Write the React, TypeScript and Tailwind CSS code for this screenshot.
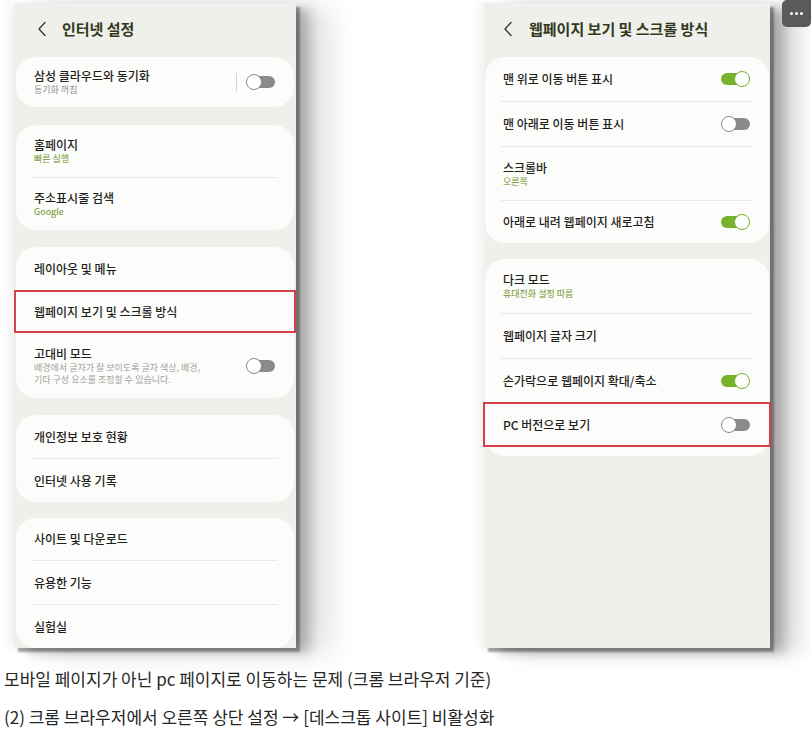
import React from 'react';

type ToggleState = 'on' | 'off';

function Toggle({ state }: { state: ToggleState }) {
  if (state === 'on') {
    return (
      <div className="relative w-[29px] h-[16px] shrink-0">
        <div className="absolute top-[2px] bottom-[2px] left-0 right-[5px] rounded-full bg-[#78b22c]" />
        <div className="absolute right-0 top-0 w-[16px] h-[16px] rounded-full bg-white border-[1.5px] border-[#78b22c]" />
      </div>
    );
  }
  return (
    <div className="relative w-[29px] h-[16px] shrink-0">
      <div className="absolute top-[2px] bottom-[2px] left-[5px] right-0 rounded-full bg-[#8a8a88]" />
      <div className="absolute left-0 top-0 w-[16px] h-[16px] rounded-full bg-white border-[1.5px] border-[#8a8a88]" />
    </div>
  );
}

function Chevron() {
  return (
    <svg width="10" height="16" viewBox="0 0 10 16" fill="none" className="shrink-0">
      <polyline points="8,1.5 2,8 8,14.5" stroke="#3a3a36" strokeWidth="1.4" strokeLinecap="round" strokeLinejoin="round" />
    </svg>
  );
}

function Divider() {
  return <div className="mx-[16px] h-px bg-[#e8e8e4]" />;
}

interface RowProps {
  title: string;
  sub?: string;
  green?: boolean;
  desc?: string[];
  toggle?: ToggleState;
  separator?: boolean;
  highlight?: boolean;
  height: string;
}

function Row({ title, sub, green, desc, toggle, separator, highlight, height }: RowProps) {
  return (
    <div
      className={`flex items-center justify-between pl-[18px] pr-[19px] ${height} ${
        highlight ? 'border-2 border-[#d6404a] -mx-[2px] pl-[18px]' : ''
      }`}
    >
      <div className="flex flex-col">
        <span className="text-[12px] leading-[16px] font-medium text-[#1f1f1d]">{title}</span>
        {sub && (
          <span className={`text-[9px] leading-[12px] ${green ? 'text-[#6f962c]' : 'text-[#8d8d8a]'}`}>{sub}</span>
        )}
        {desc &&
          desc.map((d) => (
            <span key={d} className="text-[9px] leading-[12px] text-[#a2a29e]">
              {d}
            </span>
          ))}
      </div>
      {toggle && (
        <div className="flex items-center">
          {separator && <div className="w-px h-[18px] bg-[#d2d2ce] mr-[9px]" />}
          <Toggle state={toggle} />
        </div>
      )}
    </div>
  );
}

function Card({ children, className = '' }: { children: React.ReactNode; className?: string }) {
  return <div className={`rounded-[20px] bg-[#fcfcfa] ${className}`}>{children}</div>;
}

function Header({ title, chevronPad, titlePad }: { title: string; chevronPad: string; titlePad: string }) {
  return (
    <div className={`flex items-center h-[54px] pb-[2px] ${chevronPad}`}>
      <Chevron />
      <span className={`text-[15px] font-bold text-[#323a1c] ${titlePad}`}>{title}</span>
    </div>
  );
}

function LeftPhone() {
  return (
    <div className="w-[282px] h-[645px] bg-[#efefeb] shadow-[4px_4px_2px_rgba(0,0,0,0.35),14px_5px_10px_rgba(0,0,0,0.22),34px_5px_26px_rgba(0,0,0,0.12),-6px_0_8px_rgba(0,0,0,0.05)] flex flex-col px-[2px]">
      <Header title="인터넷 설정" chevronPad="pl-[21px]" titlePad="ml-[15px]" />
      <Card>
        <Row title="삼성 클라우드와 동기화" sub="동기화 꺼짐" toggle="off" separator height="h-[50px]" />
      </Card>
      <Card className="mt-[18px]">
        <Row title="홈페이지" sub="빠른 실행" green height="h-[52px]" />
        <Divider />
        <Row title="주소표시줄 검색" sub="Google" green height="h-[52px]" />
      </Card>
      <Card className="mt-[17px]">
        <Row title="레이아웃 및 메뉴" height="h-[43px]" />
        <Row title="웹페이지 보기 및 스크롤 방식" highlight height="h-[43px]" />
        <Row
          title="고대비 모드"
          desc={['배경에서 글자가 잘 보이도록 글자 색상, 배경,', '기타 구성 요소를 조정할 수 있습니다.']}
          toggle="off"
          height="h-[65px]"
        />
      </Card>
      <Card className="mt-[17px]">
        <Row title="개인정보 보호 현황" height="h-[43px]" />
        <Divider />
        <Row title="인터넷 사용 기록" height="h-[43px]" />
      </Card>
      <Card className="mt-[16px]">
        <Row title="사이트 및 다운로드" height="h-[42px]" />
        <Divider />
        <Row title="유용한 기능" height="h-[43px]" />
        <Divider />
        <Row title="실험실" height="h-[43px]" />
      </Card>
    </div>
  );
}

function RightPhone() {
  return (
    <div className="w-[286px] h-[645px] bg-[#efefeb] shadow-[4px_4px_2px_rgba(0,0,0,0.35),14px_5px_10px_rgba(0,0,0,0.22),30px_5px_20px_rgba(0,0,0,0.14),-6px_0_8px_rgba(0,0,0,0.05)] flex flex-col px-[1px]">
      <Header title="웹페이지 보기 및 스크롤 방식" chevronPad="pl-[18px]" titlePad="ml-[16px]" />
      <Card>
        <Row title="맨 위로 이동 버튼 표시" toggle="on" height="h-[44px]" />
        <Divider />
        <Row title="맨 아래로 이동 버튼 표시" toggle="off" height="h-[44px]" />
        <Divider />
        <Row title="스크롤바" sub="오른쪽" green height="h-[53px]" />
        <Divider />
        <Row title="아래로 내려 웹페이지 새로고침" toggle="on" height="h-[42px]" />
      </Card>
      <Card className="mt-[16px] pb-[9px]">
        <Row title="다크 모드" sub="휴대전화 설정 따름" green height="h-[54px]" />
        <Divider />
        <Row title="웹페이지 글자 크기" height="h-[44px]" />
        <Divider />
        <Row title="손가락으로 웹페이지 확대/축소" toggle="on" height="h-[43px]" />
        <Row title="PC 버전으로 보기" toggle="off" highlight height="h-[45px]" />
      </Card>
    </div>
  );
}

export default function App() {
  return (
    <div className="relative w-[811px] h-[739px] bg-white overflow-hidden font-['Noto_Sans_CJK_KR','Noto_Sans',sans-serif]">
      <div className="flex pl-[14px] pt-[3px] gap-[188px] h-[660px]">
        <LeftPhone />
        <RightPhone />
      </div>
      <div className="pl-[4px] text-[17px] leading-[38px] text-[#262626]">
        <p>모바일 페이지가 아닌 pc 페이지로 이동하는 문제 (크롬 브라우저 기준)</p>
        <p>(2) 크롬 브라우저에서 오른쪽 상단 설정 → [데스크톱 사이트] 비활성화</p>
      </div>
      <button className="absolute top-0 right-0 w-[29px] h-[27px] bg-[#5a5a5a] rounded-b-[5px] rounded-tl-[5px] flex items-center justify-center gap-[2px]">
        <span className="w-[3px] h-[3px] rounded-full bg-white" />
        <span className="w-[3px] h-[3px] rounded-full bg-white" />
        <span className="w-[3px] h-[3px] rounded-full bg-white" />
      </button>
    </div>
  );
}
